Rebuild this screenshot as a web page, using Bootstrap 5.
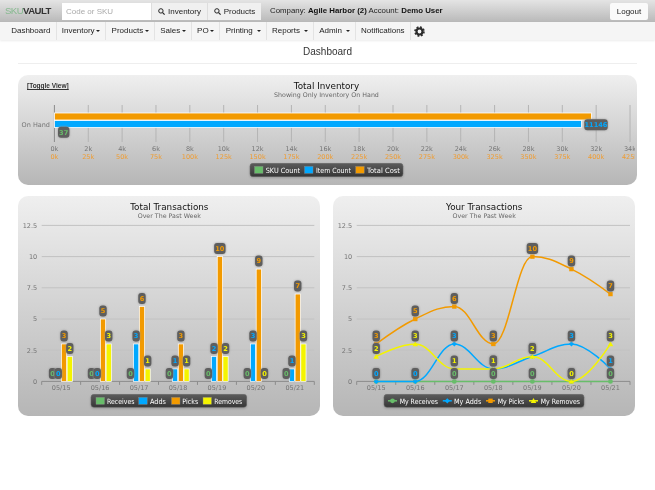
<!DOCTYPE html>
<html lang="en">
<head>
<meta charset="utf-8">
<title>SkuVault Dashboard</title>
<link href="https://cdn.jsdelivr.net/npm/bootstrap@5.3.0/dist/css/bootstrap.min.css" rel="stylesheet">
<style>
html,body{height:100%;overflow:hidden}
body{background:#fff;font-family:"Liberation Sans",Arial,sans-serif;font-size:8px;color:#333}
.sv-top{height:22px;background:linear-gradient(#e4e4e4,#b9b9b9);padding:0 7px 0 5px;filter:blur(.2px)}
.sv-logo{width:57px;font-size:9.6px;letter-spacing:-.55px;color:#333;font-weight:700}
.sv-logo span{color:#86b98f;font-weight:400}
.sv-search{width:199px;height:17px;flex-wrap:nowrap}
.sv-search .form-control{width:89px;flex:none;height:17px;min-height:0;padding:0 4px;font-size:8px;border:0;border-radius:0;background:#fff;color:#333}
.sv-search .form-control::placeholder{color:#aaa}
.sv-search .btn{height:17px;font-size:8px;line-height:17px;padding:0;margin-left:0!important;border:0;border-left:1px solid #ddd;border-radius:0;background:#f0f0f0;color:#222;display:flex;align-items:center;justify-content:center;gap:3px}
.sv-w56{width:56px}.sv-w54{width:54px}
.sv-co{margin-left:9px;font-size:7.85px;white-space:nowrap;color:#222}
.sv-co b{font-weight:700;color:#111}
.sv-logout{height:17px;width:38px;padding:0;font-size:8px;line-height:17px;border:0;border-radius:2px;background:#fafafa;color:#222}
.sv-nav{height:18px;background:#f5f5f5;padding-left:6px;box-shadow:0 1px 2px rgba(0,0,0,.08);flex-wrap:nowrap;filter:blur(.2px)}
.sv-nav .nav-link{height:18px;line-height:18px;padding:0 5.2px;font-size:8px;color:#222;border-right:1px solid #e3e3e3;white-space:nowrap}
.sv-nav .dropdown-toggle::after{margin-left:1.6px;vertical-align:1px;border-top-width:2px;border-right-width:2px;border-left-width:2px}
.sv-nav .nav-link.sv-gear{padding-left:3.5px;border-right:0}
.sv-title{height:23px;margin:0 18px;border-bottom:1px solid #eee;font-size:10px;line-height:23px;font-weight:400;color:#333;text-align:center;box-sizing:content-box;filter:blur(.2px)}
.sv-page{padding:11px 18px 0}
.sv-panel{position:relative;background:linear-gradient(#efefef,#b6b6b6);border-radius:10px;overflow:hidden}
.sv-panel svg{display:block;filter:blur(.3px)}
.sv-h1{height:110px;margin-bottom:11px}
.sv-h2{height:220px}
.sv-two{display:grid;grid-template-columns:302px 302px;gap:13px}
.sv-toggle{position:absolute;left:9px;top:7px;font-size:6.5px;font-weight:700;line-height:8px;color:#333;font-family:"Liberation Sans",Arial,sans-serif;filter:blur(.2px)}
svg text{font-family:"DejaVu Sans","Liberation Sans",sans-serif}
.t-title{font-size:8.8px;fill:#111;text-anchor:middle}
.t-sub{font-size:6.3px;fill:#666;text-anchor:middle}
.t-ax{font-size:6.5px;fill:#757575}
.t-org{font-size:6.5px;fill:#f09c30;text-anchor:middle}
.t-leg{font-size:7.2px;fill:#fff;font-weight:400}
.t-bdg{font-size:6.6px;font-weight:700;text-anchor:middle}
.b-rect{fill:#5e5e5e;filter:drop-shadow(0 0 1px #999)}
.l-box{fill:url(#lg);stroke:#6a6a6a;stroke-width:.5;filter:drop-shadow(0 1px 1px rgba(0,0,0,.2))}
</style>
</head>
<body>
<nav class="sv-top d-flex align-items-center">
  <div class="sv-logo"><span>SKU</span>VAULT</div>
  <div class="input-group sv-search">
    <input class="form-control" type="text" placeholder="Code or SKU">
    <button class="btn sv-w56" type="button"><svg width="7" height="7" viewBox="0 0 7 7"><circle cx="2.9" cy="2.9" r="2.2" fill="none" stroke="#222" stroke-width="1"/><path d="M4.6 4.6 6.6 6.6" stroke="#222" stroke-width="1.1"/></svg>Inventory</button>
    <button class="btn sv-w54" type="button"><svg width="7" height="7" viewBox="0 0 7 7"><circle cx="2.9" cy="2.9" r="2.2" fill="none" stroke="#222" stroke-width="1"/><path d="M4.6 4.6 6.6 6.6" stroke="#222" stroke-width="1.1"/></svg>Products</button>
  </div>
  <div class="sv-co">Company: <b>Agile Harbor (2)</b> Account: <b>Demo User</b></div>
  <button class="btn sv-logout ms-auto" type="button">Logout</button>
</nav>
<ul class="nav sv-nav">
  <li class="nav-item"><a class="nav-link" href="#">Dashboard</a></li>
  <li class="nav-item"><a class="nav-link dropdown-toggle" href="#">Inventory</a></li>
  <li class="nav-item"><a class="nav-link dropdown-toggle" href="#">Products</a></li>
  <li class="nav-item"><a class="nav-link dropdown-toggle" href="#">Sales</a></li>
  <li class="nav-item"><a class="nav-link dropdown-toggle" href="#">PO</a></li>
  <li class="nav-item"><a class="nav-link dropdown-toggle" href="#">Printing </a></li>
  <li class="nav-item"><a class="nav-link dropdown-toggle" href="#">Reports </a></li>
  <li class="nav-item"><a class="nav-link dropdown-toggle" href="#">Admin </a></li>
  <li class="nav-item"><a class="nav-link" href="#">Notifications</a></li>
  <li class="nav-item"><a class="nav-link sv-gear d-flex align-items-center" href="#" aria-label="Settings"><svg width="11" height="11" viewBox="0 0 11 11"><circle cx="5.5" cy="5.5" r="3" fill="none" stroke="#2c2c2c" stroke-width="2.2"/><circle cx="5.5" cy="5.5" r="4.5" fill="none" stroke="#2c2c2c" stroke-width="1.6" stroke-dasharray="1.9 1.63"/></svg></a></li>
</ul>
<h1 class="sv-title">Dashboard</h1>
<main class="sv-page">
  <section class="sv-panel sv-h1"><svg id="c1" width="617" height="110" viewBox="18 75 617 110"></svg><a class="sv-toggle" href="#">[Toggle View]</a></section>
  <div class="sv-two">
    <section class="sv-panel sv-h2"><svg id="c2" width="302" height="220" viewBox="18 196 302 220"></svg></section>
    <section class="sv-panel sv-h2"><svg id="c3" width="302" height="220" viewBox="333 196 302 220"></svg></section>
  </div>
</main>
<script src="https://cdn.jsdelivr.net/npm/bootstrap@5.3.0/dist/js/bootstrap.bundle.min.js"></script>
<script>
var G='#68bd6a',B='#00a8ff',O='#f29a00',Y='#f4f400';
function el(p,n,a,t){var e=document.createElementNS('http://www.w3.org/2000/svg',n);for(var k in a)e.setAttribute(k,a[k]);if(t!=null)e.textContent=t;p.appendChild(e);return e}
function line(s,x1,y1,x2,y2,c,w){el(s,'line',{x1:x1,y1:y1,x2:x2,y2:y2,stroke:c,'stroke-width':w||1})}
function defs(s){var d=el(s,'defs',{}),g=el(d,'linearGradient',{id:'lg',x1:0,y1:0,x2:0,y2:1});el(g,'stop',{offset:0,'stop-color':'#5c5c5c'});el(g,'stop',{offset:1,'stop-color':'#363636'})}
function badge(s,x,y,t,c){var w=t.length*4+3.4,h=11;el(s,'rect',{x:x-w/2,y:y-h/2,width:w,height:h,rx:3,'class':'b-rect'});el(s,'text',{x:x,y:y+2.4,fill:c,'class':'t-bdg'},t)}
function legend(s,x,y,w,h,items){el(s,'rect',{x:x,y:y,width:w,height:h,rx:3,'class':'l-box'});items.forEach(function(i){
  if(i.sw)el(s,'rect',{x:i.sx,y:y+3,width:8.5,height:7,fill:i.c,stroke:'#888','stroke-width':.4});
  else{line(s,i.sx,y+6.5,i.sx+9,y+6.5,i.c,1.5);mark(s,i.sx+4.5,y+6.5,i.m,i.c)}
  el(s,'text',{x:i.tx,y:y+9.2,'class':'t-leg',textLength:i.tw,lengthAdjust:'spacingAndGlyphs'},i.t)})}
function mark(s,x,y,m,c){
  if(m=='c')el(s,'circle',{cx:x,cy:y,r:2.4,fill:c});
  if(m=='s')el(s,'rect',{x:x-2.2,y:y-2.2,width:4.4,height:4.4,fill:c});
  if(m=='d')el(s,'polygon',{points:[x,y-2.6,x+2.6,y,x,y+2.6,x-2.6,y].join(),fill:c});
  if(m=='t')el(s,'polygon',{points:[x,y-2.8,x+2.8,y+2.2,x-2.8,y+2.2].join(),fill:c});
}
/* Total Inventory */
(function(){var s=document.getElementById('c1'),x0=54.4,st=33.86;defs(s);
 el(s,'text',{x:326.5,y:89,'class':'t-title'},'Total Inventory');
 el(s,'text',{x:326.5,y:97,'class':'t-sub'},'Showing Only Inventory On Hand');
 for(var i=0;i<18;i++){var x=x0+i*st;line(s,x,105,x,142,i?'#b4b4b4':'#8a8a8a',1);
  el(s,'text',{x:x,y:151,'class':'t-ax','text-anchor':'middle'},(i*2)+'k');
  el(s,'text',{x:x,y:158.5,'class':'t-org'},(i*25)+'k');}
 el(s,'text',{x:50,y:127,'class':'t-ax','text-anchor':'end'},'On Hand');
 el(s,'rect',{x:54.5,y:113,width:537,height:7,fill:O,stroke:'#fff','stroke-width':.8});
 el(s,'rect',{x:54.5,y:120.5,width:527,height:7,fill:B,stroke:'#fff','stroke-width':.8});
 badge(s,63.7,132.3,'37',G);badge(s,596,124.7,'11146',B);
 legend(s,250,163.3,153,13.4,[
  {sw:1,sx:254.5,c:G,tx:265.7,tw:34.5,t:'SKU Count'},
  {sw:1,sx:304.5,c:B,tx:316,tw:35,t:'Item Count'},
  {sw:1,sx:355.7,c:O,tx:367,tw:33,t:'Total Cost'}]);
})();
var cats=['05/15','05/16','05/17','05/18','05/19','05/20','05/21'],ser=[
 {c:G,m:'c',d:[0,0,0,0,0,0,0]},{c:B,m:'d',d:[0,0,3,1,2,3,1]},{c:O,m:'s',d:[3,5,6,3,10,9,7]},{c:Y,m:'t',d:[2,3,1,1,2,0,3]}];
function axes(s,x0,x1,cx,title){var base=381.4,u=12.48;defs(s);
 el(s,'text',{x:cx,y:210,'class':'t-title'},title);
 el(s,'text',{x:cx,y:218,'class':'t-sub'},'Over The Past Week');
 [[0,'0'],[2.5,'2.5'],[5,'5'],[7.5,'7.5'],[10,'10'],[12.5,'12.5']].forEach(function(v){var y=base-v[0]*u;
  if(v[0])line(s,x0,y,x1,y,'#c2c2c2',1);
  el(s,'text',{x:x0-4.5,y:y+2.4,'class':'t-ax','text-anchor':'end'},v[1]);});
 line(s,x0,base,x1,base,'#8c8c8c',1);
 var w=(x1-x0)/7;for(var i=0;i<=7;i++)line(s,x0+i*w,base,x0+i*w,base+3.5,'#8c8c8c',1);
 cats.forEach(function(c,i){el(s,'text',{x:x0+(i+.5)*w,y:389.5,'class':'t-ax','text-anchor':'middle'},c)});
 return {base:base,u:u,w:w};}
/* Total Transactions */
(function(){var s=document.getElementById('c2'),x0=41.7,x1=314.3,a=axes(s,x0,x1,169.3,'Total Transactions'),off=[-8.6,-2.9,2.9,8.6];
 ser.forEach(function(r,k){r.d.forEach(function(v,i){if(!v)return;var cx=x0+(i+.5)*a.w+off[k],y=a.base-v*a.u;
  el(s,'rect',{x:cx-2.6,y:y,width:5.2,height:v*a.u,fill:r.c,stroke:'#fff','stroke-width':.7});});});
 ser.forEach(function(r,k){r.d.forEach(function(v,i){badge(s,x0+(i+.5)*a.w+off[k],a.base-v*a.u-8,String(v),r.c)})});
 legend(s,91,394.3,155.7,13,[
  {sw:1,sx:96,c:G,tx:107,tw:27.5,t:'Receives'},
  {sw:1,sx:138.7,c:B,tx:150,tw:16,t:'Adds'},
  {sw:1,sx:171.5,c:O,tx:182.3,tw:16,t:'Picks'},
  {sw:1,sx:203,c:Y,tx:214.3,tw:28,t:'Removes'}]);
})();
/* Your Transactions */
function spline(p){var d='M'+p[0].join(' '),rx=p[0][0],ry=p[0][1];
 for(var i=1;i<p.length;i++){var x=p[i][0],y=p[i][1],lx=x,ly=y,nrx=x,nry=y;
  if(i<p.length-1){var q=p[i-1],n=p[i+1];lx=(1.5*x+q[0])/2.5;ly=(1.5*y+q[1])/2.5;nrx=(1.5*x+n[0])/2.5;nry=(1.5*y+n[1])/2.5;
   var c=((nry-ly)*(nrx-x))/(nrx-lx)+y-nry;ly+=c;nry+=c;
   if(ly>q[1]&&ly>y){ly=Math.max(q[1],y);nry=2*y-ly}else if(ly<q[1]&&ly<y){ly=Math.min(q[1],y);nry=2*y-ly}
   if(nry>n[1]&&nry>y){nry=Math.max(n[1],y);ly=2*y-nry}else if(nry<n[1]&&nry<y){nry=Math.min(n[1],y);ly=2*y-nry}}
  d+=' C'+[rx,ry,lx,ly,x,y].join(' ');rx=nrx;ry=nry}
 return d}
(function(){var s=document.getElementById('c3'),x0=356.7,x1=630,a=axes(s,x0,x1,484.2,'Your Transactions');
 ser.forEach(function(r){var p=r.d.map(function(v,i){return [x0+(i+.5)*a.w,a.base-v*a.u]});
  el(s,'path',{d:spline(p),fill:'none',stroke:r.c,'stroke-width':1.5});
  p.forEach(function(q){mark(s,q[0],q[1],r.m,r.c)});});
 ser.forEach(function(r){r.d.forEach(function(v,i){badge(s,x0+(i+.5)*a.w,a.base-v*a.u-8,String(v),r.c)})});
 legend(s,384,394.3,200,13,[
  {sx:388,c:G,m:'c',tx:399.7,tw:38.3,t:'My Receives'},
  {sx:442.8,c:B,m:'d',tx:454,tw:27.3,t:'My Adds'},
  {sx:486,c:O,m:'s',tx:497.7,tw:26.6,t:'My Picks'},
  {sx:529,c:Y,m:'t',tx:540.7,tw:39.3,t:'My Removes'}]);
})();
</script>
</body>
</html>
